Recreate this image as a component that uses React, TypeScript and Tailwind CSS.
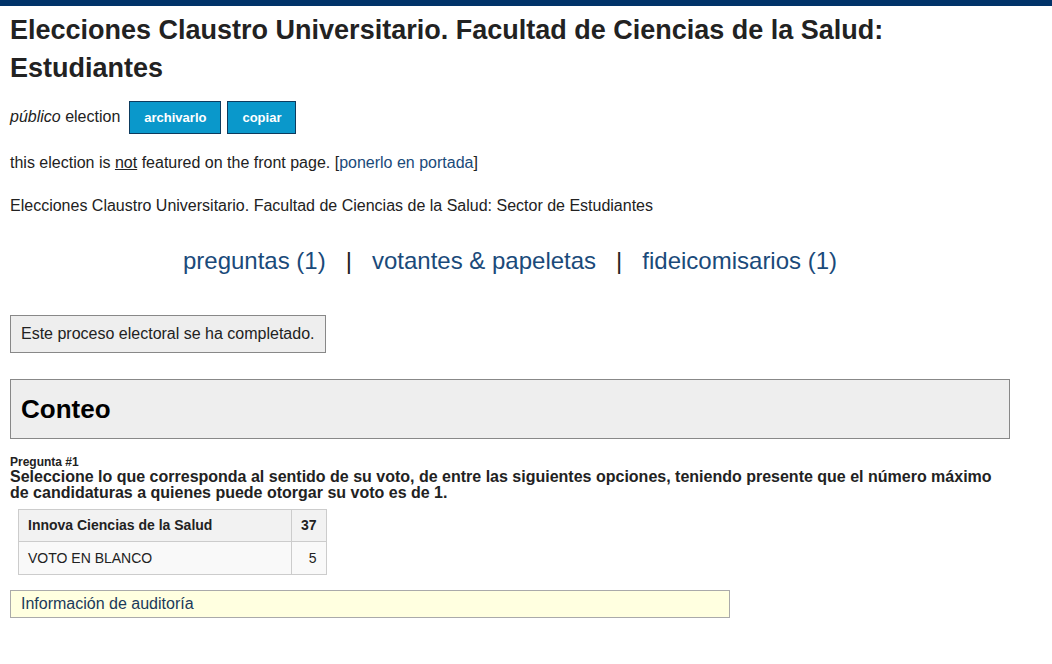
export default function App() {
  return (
    <div className="min-h-screen bg-white font-['Liberation_Sans',Arial,sans-serif] text-[#222]">
      <div className="h-[6px] bg-[#013369]" />
      <div className="w-[1020px] px-[10px]">
        <h1 className="mt-[5px] text-[27px] font-bold leading-[38px] text-[#222]">
          Elecciones Claustro Universitario. Facultad de Ciencias de la Salud: Estudiantes
        </h1>

        <div className="mt-[14px] flex items-center gap-[6px] text-[16px]">
          <span className="mr-[3px] -mt-[2px]">
            <em>público</em> election
          </span>
          <button className="h-[33px] border border-[#0d3b5e] bg-[#0a98cb] px-[14px] text-[13px] font-bold text-white">
            archivarlo
          </button>
          <button className="h-[33px] border border-[#0d3b5e] bg-[#0a98cb] px-[14px] text-[13px] font-bold text-white">
            copiar
          </button>
        </div>

        <p className="mt-[19px] text-[16px] leading-[20px]">
          this election is <u>not</u> featured on the front page.{" "}
          <span>
            [<a className="text-[#1a4a7a]">ponerlo en portada</a>]
          </span>
        </p>

        <p className="mt-[23px] text-[16px] leading-[20px]">
          Elecciones Claustro Universitario. Facultad de Ciencias de la Salud: Sector de Estudiantes
        </p>

        <div className="mt-[30px] flex justify-center gap-[20px] text-[24px] leading-[30px]">
          <a className="text-[#1a4a7a]">preguntas (1)</a>
          <span className="text-[#222]">|</span>
          <a className="text-[#1a4a7a]">votantes &amp; papeletas</a>
          <span className="text-[#222]">|</span>
          <a className="text-[#1a4a7a]">fideicomisarios (1)</a>
        </div>

        <div className="mt-[39px] inline-block border border-[#888] bg-[#eee] px-[10px] py-[8px] text-[16px] leading-[20px]">
          Este proceso electoral se ha completado.
        </div>

        <div className="mt-[26px] border border-[#888] bg-[#eee] px-[10px] py-[13px]">
          <h2 className="text-[26px] font-bold leading-[32px] text-black">Conteo</h2>
        </div>

        <div className="mt-[17px] text-[12px] font-bold leading-[13px]">Pregunta #1</div>
        <div className="text-[16px] font-bold leading-[16px]">
          Seleccione lo que corresponda al sentido de su voto, de entre las siguientes opciones, teniendo presente que el número máximo de candidaturas a quienes puede otorgar su voto es de 1.
        </div>

        <table className="ml-[8px] mt-[8px] border-collapse text-[14px]">
          <tbody>
            <tr className="bg-[#f2f2f2]">
              <td className="h-[32px] w-[273px] border border-[#ccc] px-[9px] font-bold">
                Innova Ciencias de la Salud
              </td>
              <td className="w-[34px] border border-[#ccc] px-[9px] text-right font-bold">37</td>
            </tr>
            <tr className="bg-[#f9f9f9]">
              <td className="h-[33px] border border-[#ccc] px-[9px]">VOTO EN BLANCO</td>
              <td className="border border-[#ccc] px-[9px] text-right">5</td>
            </tr>
          </tbody>
        </table>

        <div className="mt-[15px] w-[720px] border border-[#aaa] bg-[#ffffe0] px-[10px] py-[3px] text-[16px] leading-[20px] text-[#1a3a5a]">
          Información de auditoría
        </div>
      </div>
    </div>
  );
}
